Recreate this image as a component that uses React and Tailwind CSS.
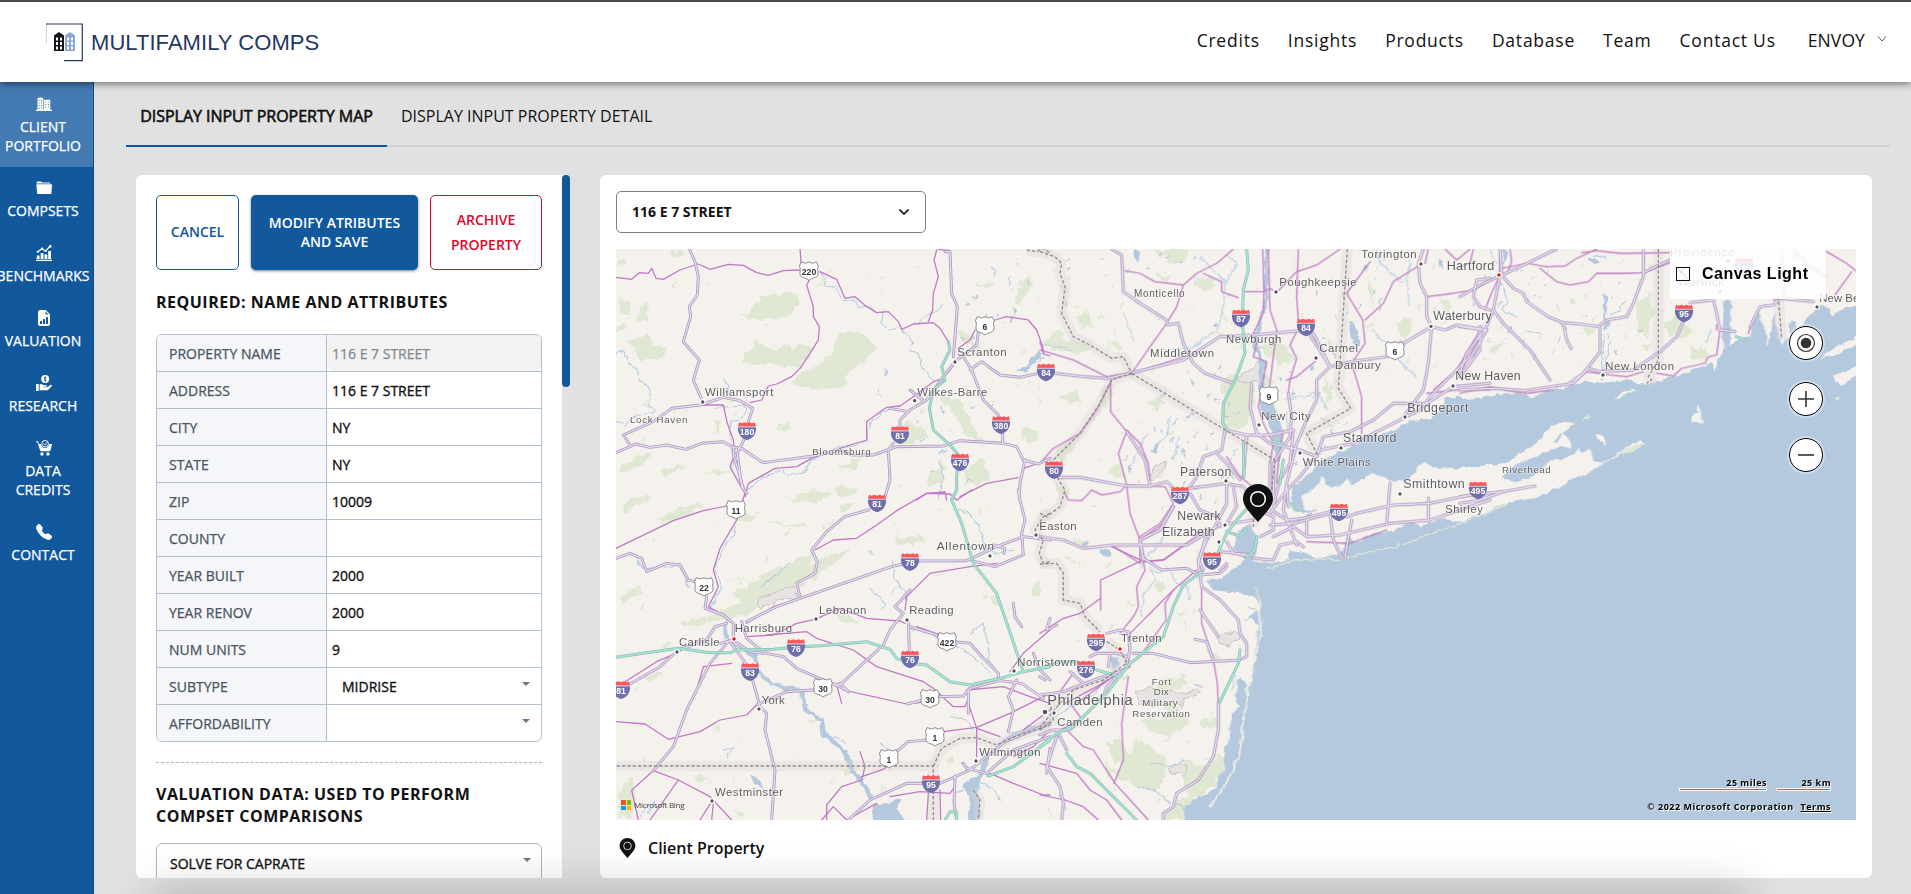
import React from "react";
import { BsFileEarmarkBarGraphFill, BsTelephoneFill } from "react-icons/bs";

/* ---------- map data: each sheet is drawn at 3 units per pixel ---------- */

const SHEETS = [
  {
    x: 600,
    y: 160,
    green: [
      "430,465 490,410 580,398 600,430 560,470 500,480 460,480",
      "425,590 470,545 520,570 600,550 640,570 600,620 520,610 450,620",
      "575,670 610,630 680,600 720,520 800,525 830,560 790,610 740,640 740,675 650,690",
      "90,540 140,520 160,560 195,560 190,600 120,600",
      "60,410 90,430 85,460 60,450", "130,430 150,440 145,490 110,480",
      "200,275 250,268 260,290 215,292", "50,300 80,290 78,318 55,320",
      "1130,370 1180,365 1175,378 1130,376", "1240,420 1265,360 1300,345 1290,390 1255,445",
      "1080,510 1150,560 1120,560 1080,540", "1010,700 1070,720 1100,760 1150,850 1100,830 1060,760",
      "930,780 990,830 940,850 900,860", "1090,930 1150,900 1170,960 1100,980",
      "60,920 130,880 150,890 100,930 60,940", "180,930 260,915 255,930 190,942",
      "720,920 790,890 770,920 725,935", "540,790 570,795 570,812 545,812", "345,785 360,780 360,808 348,812",
      "310,940 400,925 360,950", "700,980 780,990 720,1010", "980,960 1030,900 1030,960 990,985",
      "1270,800 1320,820 1290,850 1265,830", "50,500 80,490 82,510 50,515",
    ],
    water: ["1250,632 1280,620 1290,595 1315,570 1328,580 1318,600 1290,618 1285,635", "1240,440 1248,450 1243,472 1238,455", "850,625 862,640 855,648"],
    r: [
      "655,335 680,355 672,375 705,378 712,395 735,425 765,415 775,440 800,435 830,460 850,455 845,490 862,510 885,505 900,500 915,520 938,545 932,575 955,580 965,620 985,635 995,660",
      "50,585 70,570 85,610 110,630 120,660 150,690 150,740 165,755 100,770 75,800",
      "345,745 430,735 440,750 430,775 395,785 388,810 400,880 395,930 430,985",
      "440,990 480,955 545,930 560,945 610,940 630,905 690,870 760,855 800,845 812,790 870,745",
      "375,655 382,690 370,700", "950,490 990,460 1030,435", "1020,900 1030,950 1015,1010",
      "50,780 70,790", "835,690 845,708", "1175,320 1188,335 1182,350", "1205,482 1215,488",
    ],
    p: [
      "48,352 95,358 118,338 145,340 155,325 168,355 190,358 240,330 285,315 295,312 330,328 385,313 430,316 470,338 505,346 550,332 600,330",
      "600,267 603,305 612,320", "628,360 620,375 640,440 640,470 658,500 655,540 630,580 600,625 575,650 530,672 505,678 485,720 450,728",
      "660,335 710,358 735,415 765,410 800,440 830,458 865,455 895,485 905,508 940,492 1000,488 1020,505 1045,545",
      "1010,270 1002,300 1015,350 1000,400 998,450 985,485", "1015,268 1050,272",
      "1075,565 1110,540 1125,510", "1185,480 1220,470 1285,480 1310,510 1328,560 1330,582 1350,588",
      "220,745 300,735 370,735 382,790 400,840 405,880 390,920 420,975 435,1000",
      "435,1010 445,970 525,925 590,920 635,895 750,855 800,840 800,785 860,742 900,738 940,710 1000,665 1030,655 1065,610",
      "950,1020 980,1000 1035,996 1040,1020", "1080,1010 1160,970 1255,953", "1270,925 1310,912",
    ],
    h: [
      "268,267 285,305 295,350 292,405 268,440 272,470 250,545 298,600 280,660 308,724",
      "48,878 108,852 150,862 200,855 258,868 305,850 370,845 400,862 425,865 490,908 640,888 720,870 755,885 820,885 890,860 1030,858 1080,842 1210,850 1250,860 1270,900 1315,912 1350,895",
      "92,858 70,825 160,785 215,745 300,735 370,712 420,722 458,745 445,785",
      "432,838 412,880 425,980 440,1000", "400,862 402,890 430,985",
      "1035,275 1050,275 1055,400 1072,440 1065,530 1060,590", "1135,515 1130,555 1065,605 1030,650 980,720 930,750 900,780 900,805",
      "870,745 925,755", "930,690 970,722", "1090,590 1115,630 1150,720 1195,765 1208,790 1208,848",
      "1110,630 1145,605 1200,645 1260,652 1315,640", "880,850 865,870 870,960 855,1010",
      "1275,900 1260,970 1258,1020",
    ],
    t: ["1045,545 1050,570 1025,620 1035,660 1000,690 988,745 1000,810 1050,855 1075,885 1070,950 1070,990 1055,1020"],
    b: ["1280,270 1310,275 1330,265 1350,280"],
  },
  {
    x: 600,
    y: 490,
    green: [
      "60,60 100,20 150,25 120,45 70,68", "170,90 250,50 310,40 270,75 190,105", "380,30 420,60 470,85 440,95 400,85",
      "60,320 110,285 125,300 70,345", "240,400 330,375 440,330 560,270 700,190 750,175 700,225 560,310 440,370 300,410",
      "400,310 520,240 640,190 620,240 480,320 420,350", "560,30 640,0 700,10 640,45", "480,100 610,98 625,105 600,110",
      "880,150 960,135 980,150 900,165", "720,50 760,30 740,65", "720,370 780,395 720,400",
      "1290,300 1325,265 1320,310 1290,325", "1170,320 1190,310 1200,340 1180,345",
      "60,895 95,865 110,930 90,985 55,980", "130,560 180,545 190,560 150,572", "1040,810 1060,790 1055,830",
      "180,470 215,455 200,480", "620,690 660,685 650,700", "1260,790 1300,770 1290,800", "280,850 330,865 300,880",
      "400,960 440,975 420,985", "720,830 760,850 735,860", "1000,250 1040,255 1010,262",
    ],
    water: [
      "815,990 820,935 835,945 905,925 890,960 915,990", "1090,890 1105,865 1135,860 1150,800 1165,790 1160,830 1140,880 1135,910 1140,990 1105,990 1112,930",
      "1200,750 1240,728 1350,690 1350,705 1245,745 1215,762",
      "595,595 610,598 622,655 670,688 680,730 740,780 760,830 820,920 815,930 745,835 725,785 665,735 660,695 610,660",
      "370,400 382,400 388,450 470,495 478,540 520,580 580,590 600,600 560,602 510,585 470,545 460,505 370,445",
      "450,855 480,870 490,900 460,880",
    ],
    r: [
      "410,100 405,130 370,170 345,235 365,290 330,360 375,385 385,440", "110,195 130,240 240,225 265,290", "1075,60 1100,65 1140,110 1150,160 1180,190 1240,180",
      "880,215 885,270 915,300 920,330", "930,415 1010,440 1080,470 1145,520 1170,550", "1115,430 1150,400 1160,450 1170,510 1185,540",
      "1050,680 1100,690 1115,720", "810,300 860,345 845,355", "840,755 860,775", "370,780 400,770 385,800", "810,180 820,198", "120,980 160,930 145,970", "480,290 570,220",
      "700,740 722,750 735,760", "1130,870 1180,900 1200,930", "1090,900 1060,910",
    ],
    p: [
      "48,175 220,92 310,62 380,48", "438,0 410,90 360,175 340,240 355,290 325,350 385,385",
      "645,180 700,150 770,145 830,105 890,62 980,10 1050,12 1070,30", "1070,30 1115,0",
      "440,400 520,350 650,310", "440,440 520,435 590,400 645,388 720,355 800,385 900,393 915,400",
      "500,435 620,425 650,445 760,480 830,530 970,575 1000,595 1060,650 1095,650 1105,625",
      "915,360 920,320 990,250 1110,230 1190,220", "950,410 1050,445", "710,585 725,640", "730,600 920,642 980,635",
      "75,575 170,515 240,485", "395,520 310,530 290,600", "48,695 135,702 205,748 300,725 360,690 440,675 470,645",
      "160,842 235,870 330,920 395,990", "235,870 200,920 150,990", "340,940 335,990", "160,842 95,900 115,990", "335,935 300,990",
      "780,785 795,830 785,870 725,890 680,945 680,990", "785,860 850,838 868,825", "1030,725 1130,712 1230,670 1350,610",
      "1105,640 1130,715 1130,800", "1130,715 1200,740", "1100,600 1210,590 1290,620 1350,640", "1230,545 1270,490 1350,420",
      "870,920 960,905 1050,910 1065,890", "985,910 980,990", "1020,900 1022,990", "1170,850 1240,880 1330,915 1350,915", "1085,820 1110,840",
      "665,990 700,950 740,990 830,940", "1240,800 1300,770 1350,720", "1270,720 1350,660",
    ],
    h: [
      "440,395 530,350 600,325 880,228 960,213 1100,212 1190,170 1270,140 1350,150", "425,395 440,445 470,470 500,490 550,500 590,535 670,570 740,600 745,605",
      "48,205 90,190 125,205 140,245 200,220 240,225 265,270 285,275", "320,320 315,355 370,375 400,400 400,440",
      "805,60 735,80 680,125 635,180 652,215 645,250 590,280 600,320", "1115,212 1185,230 1270,195 1265,130 1275,90 1260,30 1255,0",
      "75,590 180,530 235,480 320,450 345,410 380,400", "390,455 430,510 455,560 480,650 500,670 495,720 525,840 515,990",
      "385,455 330,520 260,660 220,770 160,842", "470,645 560,605 640,600", "695,580 720,585 795,515 850,465 870,420 910,370 885,350 930,300",
      "925,390 928,480", "720,580 745,605", "890,785 925,755 980,750", "745,990 810,930 920,880 965,880", "1020,880 1110,840 1215,755 1350,700",
      "1065,860 1062,940 1070,990", "1015,620 1090,618 1110,595 1200,572 1265,580 1330,625", "1060,455 1110,460 1150,505 1195,550 1195,570",
      "1105,600 1105,670", "1250,570 1225,620 1240,660 1225,725", "930,410 1010,435", "1240,340 1245,380 1265,410", "1300,490 1320,540 1350,570", "1350,740 1240,780 1160,850", "1350,775 1340,850", "1180,165 1215,175 1212,190",
      "920,642 970,630", "360,460 400,450 450,485 490,490", "1090,820 1100,835 1160,850",
    ],
    t: [
      "48,502 160,485 235,475 330,488 390,488 410,480 520,478 600,470 660,467 800,455 870,478 890,505 930,520 980,525 1050,575 1110,585 1200,565 1270,545 1350,530",
      "1055,30 1085,100 1120,220 1190,310 1270,545", "1165,858 1240,830 1350,750", "1035,990 1050,965 1070,965 1070,990",
    ],
    b: [
      "50,828 1000,828 1000,990", "1000,828 1025,775 1080,745 1130,743 1190,765 1245,740 1350,705", "1350,70 1330,80 1305,120 1330,150 1318,190 1330,220 1350,215", "1120,900 1140,930 1135,990",
    ],
  },
  {
    x: 1040,
    y: 230,
    green: [
      "340,57 440,57 445,70 410,110", "10,330 60,300 80,330 150,340 160,365 80,365 20,355", "470,160 510,130 530,170 490,185",
      "550,450 600,430 650,470 640,540 600,600 560,595 545,550", "185,480 220,460 215,500 170,560 120,620 80,690 40,690 60,650 130,600 180,530",
      "650,350 690,340 740,345 760,380 720,410 690,380", "660,430 690,440 690,470 650,450", "60,500 110,480 120,510 90,520",
      "220,340 250,345 240,370", "100,255 150,250 155,290 130,300", "1060,280 1100,260 1120,300 1090,330", "350,130 400,140 370,155",
      "850,420 880,500 860,540", "200,715 240,700 250,740 210,735", "980,150 1010,180 995,220", "50,760 90,780 80,800 55,790", "1040,640 1080,600 1100,610",
      "1190,190 1230,230 1220,250", "90,930 150,935 130,955", "310,520 370,500 350,540", "860,320 880,340 870,370",
    ],
    water: [
      "675,57 686,57 684,220 660,300 652,350 680,400 670,470 700,520 725,600 722,700 705,690 695,600 660,520 655,440 660,390 640,350 645,300 670,240",
      "930,270 955,310 960,350 945,345 928,300", "285,57 300,70 295,100 283,80", "180,955 210,960 210,978 190,975",
      "330,660 360,640 345,670", "1195,85 1210,95 1205,120",
    ],
    r: [
      "560,75 590,100 555,160 550,215 545,250 530,300 500,320 455,355 360,360", "1010,60 1015,90 1050,130 1085,155", "0,345 40,350 100,360",
      "1000,300 1040,345 1070,385 1130,440", "390,560 380,620 350,640", "480,80 520,120 560,160", "730,510 780,500 830,490 860,540",
      "300,1020 320,980 350,950 370,920", "250,250 280,330", "420,620 400,680", "280,690 300,650 320,610", "740,540 745,600", "840,560 880,590", "1110,80 1100,160 1110,230",
    ],
    p: [
      "255,122 300,130 345,155 430,165 470,130 530,100 580,57", "430,165 410,230 380,280 330,350 275,430", "490,130 545,155 545,185 595,203",
      "612,185 670,185 690,175 705,185", "668,57 672,180 670,250 640,310 650,340 640,380 680,395 668,460", "685,57 690,240 710,300 690,460 685,490",
      "775,57 770,200 775,270", "710,187 770,125 830,105 900,57", "990,95 920,190 968,270 975,340 935,400 965,500 965,610", "770,305 750,345 770,385 750,450 745,490",
      "1140,105 1060,155 1030,220 975,270", "1165,57 1155,100", "1160,200 1240,190 1300,180 1350,150", "0,360 100,390 200,440 275,430 370,400 460,370",
      "212,450 212,545 260,605 235,670 260,765 270,850 300,930 300,1000", "0,700 40,655 120,610 170,540 215,450", "260,600 300,640 325,700 330,750",
      "75,790 85,810 125,812 155,780 185,795 240,785 260,765 375,770 400,820 360,880 300,920", "300,1000 215,945", "310,995 370,990 440,940 490,900",
      "668,460 655,530 670,580 700,640 690,700", "730,600 715,700 710,760", "0,335 10,370", "1215,57 1250,90 1290,57", "1320,300 1250,420 1180,480", "740,450 770,440 830,390",
      "800,935 930,940 1040,900", "560,680 600,740 650,780", "1160,490 1250,480 1350,480",
    ],
    h: [
      "215,57 245,75 250,185 300,220 380,270 382,285 415,280 430,340 460,400 495,430 580,460", "45,430 130,440 200,445 270,430 430,390 540,320 640,315 770,303 800,300 870,410",
      "1150,57 1135,100 1140,160 1160,200 1160,260 1175,290 1215,300 1250,285 1340,300", "820,310 850,370 870,410 830,450 830,510 800,570 770,640 740,760 745,830",
      "870,410 930,395 1040,380", "1090,340 1175,290", "1175,290 1165,400 1150,480 1120,520 1090,560",
      "1350,145 1310,150 1300,200 1320,230 1350,240", "1340,300 1300,370 1240,430 1170,500 1140,540 1060,580 940,640 840,660 780,740 740,780 690,850",
      "1350,460 1240,470 1160,520 1060,520 1000,570 930,605 850,620 830,680", "635,460 630,530 650,610 690,640 780,660 830,680",
      "555,600 620,615 690,615 760,600", "555,600 545,660 490,680 470,740 450,770", "620,615 610,740", "760,600 750,700 720,750 700,830",
      "58,742 120,742 260,768 330,768 380,755 400,775", "448,775 560,760 610,770 640,810", "530,670 560,700 600,750", "330,768 315,690 260,605",
      "450,790 480,840 530,860 540,890", "560,760 560,820 530,880 500,930 475,990 490,1020", "400,830 360,900 300,930 310,990", "0,920 70,930 130,955 220,945 300,945 440,945 540,885 640,870",
      "695,840 740,870 790,865 870,845", "690,885 760,880 870,850", "920,860 950,850 1060,825 1170,820 1290,795", "700,920 760,890 800,920 900,915 1050,880 1170,870 1290,830 1350,810",
      "1050,760 1040,880", "1165,805 1165,870", "870,850 880,930 905,985", "935,870 915,980", "800,870 800,920", "740,760 730,840 770,945",
      "640,985 700,990 720,945 770,935 790,950", "540,965 590,970 620,980", "540,1020 560,1000", "690,700 690,780 660,830", "745,490 755,560 750,620 700,700 700,790",
      "635,830 700,860 700,900 660,920", "580,770 590,830 560,880",
    ],
    t: ["620,57 625,120 610,180 608,240", "608,290 615,370 585,450 550,520 548,580 560,598", "700,635 730,642", "610,640 612,740", "730,690 720,760", "630,825 590,870 560,910 535,965", "560,905 600,918 620,900", "650,920 645,960 620,980", "755,820 765,840"],
    b: [
      "0,65 45,80 65,100 60,130 75,170 65,250 100,320 150,345 215,385 250,380 275,430", "275,430 705,690", "275,430 215,450 180,520 120,610 40,690 50,740 75,780 60,830 20,860 0,850",
      "922,57 895,475 932,535 800,610 835,680", "705,690 695,780", "640,850 640,890",
    ],
    dots: [[708, 186], [828, 384], [1143, 102], [1173, 289], [1239, 468], [1095, 561], [903, 654], [780, 669], [657, 585], [558, 753], [555, 885], [537, 936], [1080, 792]],
  },
  {
    x: 1460,
    y: 230,
    green: ["530,230 570,180 580,250 560,320 530,300", "610,270 650,260 700,300 660,330 620,310", "690,350 750,355 730,400 700,390", "540,350 580,330 560,360", "320,210 350,200 340,225", "470,100 500,90 480,105", "370,290 410,300 385,320", "90,350 130,340 100,375", "250,100 270,120 260,130"],
    water: ["125,57 142,60 135,110 128,90", "430,190 445,200 438,260 450,290 435,300", "380,90 405,80 420,95 400,100", "1000,57 1010,90 1000,85"],
    r: ["130,170 140,210 125,240 170,260", "400,75 440,85", "450,250 480,240 500,210", "435,310 425,400 430,450", "450,340 440,380 430,430", "300,280 320,300", "200,300 240,310", "90,60 110,100", "30,400 60,350", "750,300 740,340"],
    p: [
      "120,57 118,140 90,200 75,240", "150,57 155,95 145,120", "125,115 200,100 260,110 315,108 350,85 410,57", "240,115 290,155 330,165 385,155 410,130 490,130 550,128",
      "365,68 410,62 480,70 630,68", "550,128 630,98", "375,425 420,430 450,435 500,440 550,425", "590,430 640,438 665,415 735,400 745,380 770,375 780,300", "60,320 0,430", "0,490 90,470 160,485 200,490 280,480",
      "1095,62 1160,100 1190,125", "1175,125 1125,195", "940,210 985,200", "40,57 30,100 0,110", "770,285 770,300", "880,265 865,310",
    ],
    h: [
      "290,57 170,115 125,135 120,57", "125,135 60,165 0,200", "125,135 160,175 190,190 200,215 265,260 310,278 360,282 420,290 420,365 370,430 325,462", "120,135 100,240 75,300 20,370 0,430",
      "100,240 130,280 210,360 270,450", "310,280 320,330 333,355", "0,290 75,300", "420,285 440,270 500,260 520,220 550,140 550,57",
      "0,480 100,475 190,482 270,470 340,460 385,415 420,425 520,420 600,365 650,320 670,275", "550,128 630,90", "690,218 740,212 760,210 770,250 780,300 825,305",
      "870,290 900,230 940,225 960,205 1060,215", "965,57 970,150 975,200", "1000,57 1050,110 1095,140", "0,800 80,790 130,785 225,768", "60,290 60,360 0,440", "0,820 60,810 130,785",
    ],
    t: ["828,320 855,328"],
    b: ["595,57 595,390 565,440 575,450 560,460", "955,200 965,328"],
    dots: [[429, 435], [1071, 231], [781, 184]],
  },
  {
    x: 1040,
    y: 490,
    green: ["340,590 390,560 430,550 440,580 400,600 400,640 450,700 380,735 330,720 300,690 380,680", "200,760 240,750 270,790 290,745 350,780 385,810 360,900 300,890 230,860 240,830 220,790", "340,280 370,270 380,300 350,300", "475,700 530,680 540,720 490,710", "430,810 500,830 540,790 555,820 520,890 450,930 430,870", "380,960 430,920 480,930 480,975 420,990 370,990", "90,800 110,800 105,820", "240,540 270,560 250,570", "20,960 35,970 25,985", "500,480 540,500 520,520", "260,330 280,340 265,350", "400,360 440,365 420,375", "70,200 100,210 80,215", "190,820 240,850 200,860"],
    water: ["205,505 235,500 240,530 215,540", "180,175 212,185 205,200 188,195", "130,155 150,160 145,172 130,168"],
    r: ["330,230 345,270 310,310 305,380", "380,230 410,280 440,290 450,330", "290,895 340,900 390,940", "590,560 570,600", "0,715 60,670 150,620 230,540", "330,240 360,250", "465,580 485,590", "330,820 400,830 430,810", "440,960 400,940", "80,960 60,920", "620,350 660,365", "610,390 650,370"],
    p: [
      "182,360 182,270 305,212 215,170", "182,325 120,370 70,385 0,430", "310,215 315,240 290,290 295,350 280,380 240,430", "470,240 400,300 270,430 265,530", "485,290 485,400 520,510 532,580 535,650",
      "400,300 375,340 378,390 300,500 110,640", "265,560 245,700 250,810 222,880", "85,725 130,770 160,780 225,880 325,990", "110,850 150,900 200,930 245,990", "0,820 110,850", "75,930 130,950 175,990", "0,915 75,930",
      "75,640 170,590 270,530", "60,605 100,550", "90,640 120,680", "300,150 370,100 400,50", "120,690 60,720", "310,215 370,210 440,160",
    ],
    h: [
      "300,160 310,205 365,240 440,235 480,255 540,250 560,230", "400,50 360,120 300,150", "500,130 475,220 485,290 540,330 595,390 600,430 620,460 620,500 608,505", "480,360 535,440",
      "465,448 500,455 520,510", "280,490 340,490 450,518 600,510",
      "535,640 535,720 520,800 475,870 410,910 400,950 370,970 370,990", "200,430 240,420 265,425 270,480 260,520", "150,500 170,490 230,490 260,500", "250,540 200,590 190,620", "0,615 70,605 190,560 240,545",
      "50,720 80,780", "50,740 20,830 60,890 70,940 65,990", "0,735 40,720 90,720 120,690", "210,490 205,530", "30,385 20,420 50,405", "0,560 15,570",
      "560,155 580,190 640,195", "90,545 130,580",
    ],
    t: ["485,245 430,285 400,350 370,440 270,520 200,610 100,710 50,730 0,770", "600,480 595,520 540,635", "80,790 110,830 150,850 290,990", "170,540 240,560", "0,535 60,515 110,515"],
    b: ["0,222 50,220 70,250 70,330 120,340 135,380 180,425", "200,455 240,480 260,520 190,570 100,600 60,640 0,712", "0,720 40,690 30,640"],
    dots: [[15, 666, 1], [42, 669]],
  },
];

SHEETS[0].dots = [[308, 726], [1065, 606], [944, 722]];
SHEETS[1].dots = [[648, 387], [921, 390], [231, 486], [477, 657], [336, 933], [1128, 813], [1170, 198], [1308, 135], [1242, 543]];

const OCEAN =
  "2460,225 2410,235 2380,260 2355,225 2320,240 2290,280 2270,300 2260,270 2245,285 2250,320 2235,330 2225,345 2210,290 2205,240 2185,350 2175,300 2155,240 2130,320 2110,325 2090,330 2070,350 2072,290 2075,210 2050,215 2045,290 2050,360 2035,390 2025,425 2015,400 1960,420 1900,440 1860,450 1820,465 1760,450 1690,458 1630,455 1590,470 1530,480 1480,505 1450,490 1390,490 1330,500 1290,510 1250,500 1215,505 1200,545 1170,565 1110,575 1060,598 1020,615 980,620 950,645 900,665 840,695 820,720 790,745 760,770 750,800 770,845 790,850 820,845 790,835 785,800 800,790 820,770 850,740 860,765 900,770 920,745 935,765 1000,730 1060,755 1100,750 1130,718 1150,692 1175,712 1260,714 1310,710 1390,700 1460,660 1500,630 1530,590 1570,575 1605,580 1560,615 1535,635 1550,640 1570,612 1588,630 1592,658 1565,648 1530,662 1500,675 1460,690 1420,710 1385,740 1430,758 1475,745 1500,720 1540,690 1590,680 1615,660 1625,672 1648,652 1660,690 1690,700 1740,670 1760,650 1800,630 1815,645 1740,675 1620,740 1490,803 1420,815 1310,855 1260,875 1200,870 1150,885 1100,880 1060,905 1000,910 960,935 920,920 900,975 830,985 790,965 750,960 740,990 690,1000 640,990 655,930 640,900 630,880 600,900 580,960 615,985 590,1010 560,1035 500,1055 520,1080 560,1085 610,1090 650,1110 662,1140 625,1160 655,1185 650,1220 640,1310 625,1370 600,1340 585,1390 600,1430 570,1460 570,1520 550,1560 555,1610 520,1680 460,1710 430,1740 440,1790 2460,1790";

const PATCHES = [
  "700,800 720,790 730,830 700,850", "1665,612 1690,615 1698,645 1682,635", "1628,570 1650,555 1645,562 1632,572", "2100,230 2120,225 2120,290 2105,300",
  "1955,560 1972,550 1970,527 1976,525 1980,550 1990,568 1985,580 1958,578",
  "2460,315 2400,345 2360,370 2345,383 2380,378 2460,335",
  "2380,435 2460,405 2460,435 2420,455 2400,465 2385,450", "1725,505 1750,485 1790,478 1750,500 1735,507",
];

const LABELS = [
  [0, "Williamsport", 315, 708, 205], [0, "Scranton", 1072, 588, 148], [0, "Wilkes-Barre", 952, 708, 210], [0, "Lock Haven", 90, 788, 172, 29], [0, "Bloomsburg", 637, 885, 175, 29],
  [1, "Allentown", 1010, 180, 172, 35], [1, "Reading", 928, 372, 133], [1, "Lebanon", 657, 372, 142], [1, "Harrisburg", 404, 427, 172], [1, "Carlisle", 237, 468, 122], [1, "York", 485, 642, 69], [1, "Westminster", 345, 918, 204], [1, "Wilmington", 1138, 798, 184], [1, "Norristown", 1252, 528, 176],
  [2, "Monticello", 282, 201, 152, 30], [2, "Poughkeepsie", 718, 168, 232], [2, "Newburgh", 558, 339, 166], [2, "Middletown", 330, 381, 192], [2, "Carmel", 838, 366, 116], [2, "Danbury", 885, 417, 137], [2, "Torrington", 964, 84, 166], [2, "Hartford", 1220, 119, 143, 38], [2, "Waterbury", 1180, 269, 175, 37], [2, "New Haven", 1246, 449, 196, 37], [2, "Bridgeport", 1102, 545, 183, 37], [2, "Stamford", 909, 636, 160, 37], [2, "White Plains", 788, 708, 204], [2, "New City", 664, 570, 148], [2, "Paterson", 420, 738, 154, 37], [2, "Newark", 412, 869, 130, 37], [2, "Elizabeth", 366, 917, 158, 37], [2, "Smithtown", 1090, 773, 184, 37], [2, "Shirley", 1216, 849, 112, 33], [2, "Easton", -2, 900, 112],
  [3, "New London", 436, 419, 206], [3, "Riverhead", 126, 729, 146, 29], [3, "Providence", 630, 78, 193], [3, "Warwick", 655, 167, 137], [3, "New Bedford", 1078, 215, 198],
  [4, "Trenton", 243, 456, 122], [4, "Philadelphia", 22, 645, 256, 44], [4, "Camden", 52, 708, 136], [4, "Fort", 335, 585, 58, 29], [4, "Dix", 341, 615, 45, 29], [4, "Military", 307, 648, 106, 29], [4, "Reservation", 277, 681, 173, 29],
];

const INTERSTATES = [
  [0, "180", 441, 813], [0, "81", 900, 825], [0, "380", 1203, 795], [0, "476", 1080, 907], [0, "84", 1338, 637],
  [1, "81", 831, 40], [1, "78", 930, 216], [1, "76", 588, 474], [1, "76", 930, 508], [1, "83", 450, 546], [1, "81", 63, 600], [1, "95", 993, 882],
  [2, "87", 603, 265], [2, "84", 798, 292], [2, "80", 42, 720], [2, "287", 420, 796], [2, "495", 897, 847], [2, "495", 1314, 781], [2, "95", 516, 993],
  [3, "95", 672, 250], [3, "195", 853, 110], [4, "295", 168, 457], [4, "276", 138, 538],
];

const ROUTES = [
  [0, "220", 627, 333], [0, "6", 1155, 497], [1, "11", 408, 59], [1, "22", 312, 290], [1, "30", 669, 593], [1, "422", 1041, 455], [1, "30", 990, 626], [1, "1", 1005, 740], [1, "1", 867, 806],
  [2, "9", 687, 497], [2, "6", 1065, 362],
];

const PARKS = [[1, "475,330 580,285 592,325 545,328 500,345 480,355"], [2, "595,440 640,410 660,390 680,395 675,430 655,455 600,455"], [2, "325,745 345,710 380,693 375,715 340,752"], [4, "290,605 330,590 360,600 440,610 470,595 485,610 430,625 425,655 405,630 375,650 300,640"], [4, "535,445 560,425 600,430 598,450 575,455 570,468 545,465"], [4, "385,835 400,820 437,822 437,865 420,850 395,855"]];

function seeded(seed) {
  let s = seed;
  return () => {
    s = (s * 16807) % 2147483647;
    return s / 2147483647;
  };
}

/* small lakes and woods: [centre x, centre y, spread x, spread y, count] in page pixels */
function scatter(seed, areas, size) {
  const rnd = seeded(seed);
  const out = [];
  areas.forEach(([cx, cy, sx, sy, n]) => {
    for (let i = 0; i < n; i++) {
      const x = cx + (rnd() * 2 - 1) * sx;
      const y = cy + (rnd() * 2 - 1) * sy;
      const a = size * (0.4 + rnd());
      const b = size * (0.3 + rnd() * 0.5);
      out.push(`${x},${y} ${x + b},${y - a} ${x + b * 1.4},${y - a * 0.6} ${x + b * 0.5},${y + b * 0.5}`);
    }
  });
  return out;
}
const PONDS = scatter(77, [[1250, 400, 95, 110, 70], [1180, 440, 60, 50, 35], [1350, 310, 60, 55, 30], [1010, 320, 60, 60, 18], [1560, 310, 90, 50, 36], [1130, 280, 70, 30, 15], [950, 460, 50, 60, 10]], 3.6);
const WOODS = scatter(31, [[1000, 400, 120, 130, 40], [1200, 350, 140, 90, 45], [1570, 320, 100, 55, 36], [800, 350, 180, 90, 28], [820, 560, 190, 60, 32], [1150, 590, 80, 60, 30], [760, 740, 130, 60, 16], [1170, 760, 60, 45, 20], [1400, 330, 50, 60, 20]], 4.4);

function Sheets({ pick, ...rest }) {
  return SHEETS.map((s, i) => (
    <g key={i} transform={`translate(${s.x} ${s.y}) scale(.33333)`} {...rest}>
      {pick(s, i)}
    </g>
  ));
}

const lines = (list) => (list || []).map((p, i) => <polyline key={i} points={p} />);
const polys = (list) => (list || []).map((p, i) => <polygon key={i} points={p} />);

function RegionMap() {
  return (
    <svg className="block h-full w-full" viewBox="616 249 1240 571" strokeLinejoin="round" strokeLinecap="round">
      <defs>
        <filter id="ragged" x="606" y="239" width="1260" height="591" filterUnits="userSpaceOnUse">
          <feTurbulence type="fractalNoise" baseFrequency="0.11" numOctaves="3" seed="4" />
          <feDisplacementMap in="SourceGraphic" scale="11" xChannelSelector="R" yChannelSelector="G" />
        </filter>
        <filter id="wobble" x="606" y="239" width="1260" height="591" filterUnits="userSpaceOnUse">
          <feTurbulence type="fractalNoise" baseFrequency="0.12" numOctaves="2" seed="9" />
          <feDisplacementMap in="SourceGraphic" scale="6" xChannelSelector="R" yChannelSelector="G" />
        </filter>
      </defs>
      <rect x="616" y="249" width="1240" height="571" fill="#f5f2ee" />
      <g filter="url(#ragged)">
        <g fill="#e0e8d3">
          <Sheets pick={(s) => polys(s.green)} />
          {polys(WOODS)}
        </g>
        <g fill="#b5c9de">{polys(PONDS)}</g>
      </g>
      <g filter="url(#wobble)">
        <Sheets fill="#e6e4e3" stroke="#cbbfc0" strokeWidth="3" pick={(s, i) => polys(PARKS.filter((p) => p[0] === i).map((p) => p[1]))} />
        <Sheets fill="#b5c9de" pick={(s) => polys(s.water)} />
        <Sheets fill="none" stroke="#b2cbe3" strokeWidth="3.2" pick={(s) => lines(s.r)} />
        <g transform="translate(1040 230) scale(.33333)">
          <polygon points={OCEAN} fill="#b5c9de" />
          <g fill="#f5f2ee">{polys(PATCHES)}</g>
          <polygon points="1740,668 1790,640 1815,645 1750,675" fill="#e0e8d3" />
          <polygon points="2385,502 2398,502 2396,510 2384,508" fill="#e0e8d3" />
          <path d="M1395 745L1500 720M590 960L620 900M760 770L790 830M800 860L830 840M1010 700L1060 660" fill="none" stroke="#b5c9de" strokeWidth="6" />
          <path d="M682 1017L760 990L830 986L885 990L1000 965L1100 940L1260 880L1400 825M640 1070L655 1090L658 1110" fill="none" stroke="#dfe6d6" strokeWidth="4" />
          <path d="M660 1110L660 1220L640 1310L625 1370L607 1500L598 1575L560 1660L510 1730" fill="none" stroke="#eeeee6" strokeWidth="6" />
        </g>
      </g>
      <Sheets fill="none" stroke="#ded6d4" strokeOpacity=".38" strokeWidth="32" strokeLinecap="butt" pick={(s) => lines(s.b)} />
      <Sheets fill="none" stroke="#bf79c1" strokeWidth="3.8" pick={(s) => lines(s.p)} />
      <Sheets fill="none" stroke="#ad99bf" strokeWidth="8.8" pick={(s) => lines(s.h)} />
      <Sheets fill="none" stroke="#e6dbee" strokeWidth="4" pick={(s) => lines(s.h)} />
      <Sheets fill="none" stroke="#8db9ae" strokeWidth="9" pick={(s) => lines(s.t)} />
      <Sheets fill="none" stroke="#a6e3d5" strokeWidth="5.5" pick={(s) => lines(s.t)} />
      <Sheets fill="none" stroke="#8f8d8d" strokeWidth="4" strokeDasharray="10 6" strokeLinecap="butt" pick={(s) => lines(s.b)} />
      <Sheets
        pick={(s) => (s.dots || []).map(([x, y, big], i) => <circle key={i} cx={x} cy={y} r={big ? 9 : 7} fill="#555" stroke="#fff" strokeWidth="4" />)}
      />
      <g fill="#e21a1a" stroke="#fff" strokeWidth="1.2">
        <circle cx="734" cy="639" r="2.4" />
        <circle cx="1499" cy="275" r="2.4" />
        <circle cx="1120" cy="649" r="2.4" />
        <circle cx="1728" cy="261" r="2.4" />
      </g>
      <Sheets
        pick={(s, n) => (
          <>
            {INTERSTATES.filter((r) => r[0] === n).map(([, t, x, y], i) => (
              <g key={i} transform={`translate(${x} ${y})`}>
                <path d="M-27 -13H27C29 8 18 22 0 27C-18 22 -29 8 -27 -13Z" fill="#6f70ab" />
                <path d="M-24 -26L-16 -23L-8 -26L0 -23L8 -26L16 -23L24 -26L27 -13H-27Z" fill="#f9595c" />
                <path d="M-27 -12H27" stroke="#fff" strokeWidth="2" />
                <text y="12" textAnchor="middle" fontSize="26" fontWeight="700" fill="#fff">{t}</text>
              </g>
            ))}
            {ROUTES.filter((r) => r[0] === n).map(([, t, x, y], i) => (
              <g key={i} transform={`translate(${x} ${y})`}>
                <path d="M-22 -27L-11 -23L0 -27L11 -23L22 -27L28 -14C22 -6 30 4 26 14C20 22 8 20 0 28C-8 20 -20 22 -26 14C-30 4 -22 -6 -28 -14Z" fill="#fff" stroke="#777" strokeWidth="2.5" />
                <text y="12" textAnchor="middle" fontSize="26" fontWeight="700" fill="#333">{t}</text>
              </g>
            ))}
            {LABELS.filter((l) => l[0] === n).map(([, t, x, y, w, size = 34], i) => (
              <text key={i} x={x} y={y} textLength={w} fontSize={size} fill="#5c5c5e" stroke="#fff" strokeOpacity=".55" strokeWidth="4" paintOrder="stroke">{t}</text>
            ))}
          </>
        )}
      />
    </svg>
  );
}

/* ---------- icons ---------- */

const Buildings = () => (
  <svg viewBox="0 0 16 16" className="h-4 w-4" fill="currentColor">
    <path fillRule="evenodd" d="M0 13.8h1.500V2.300L4 1.200L7.300 2V13.800H8V3.800H14.300V13.800H16V15H0zM2.600 4v1h1V4zm2.400 0v1h1V4zM2.600 6.500v1h1v-1zm2.400 0v1h1v-1zM2.600 9v1h1V9zM5 9v1h1V9zM2.600 11.500v1h1v-1zm2.400 0v1h1v-1zM9.200 5.500v1h1v-1zm2.700 0v1h1v-1zM9.200 8v1h1V8zm2.700 0v1h1V8zM9.200 10.500v1h1v-1zm2.700 0v1h1v-1z" />
  </svg>
);
const Folder = () => (
  <svg viewBox="0 0 16 16" className="h-4 w-4" fill="currentColor">
    <path d="M.6 2.2Q.7 1.5 1.3 1.5H4.9L6 2.6H13.6Q14.4 2.7 14.4 3.5H.6zM.6 4.2H15.4Q16 4.2 16 4.9L15.4 13.2Q15.3 14 14.6 14H1.9Q1.2 14 1.1 13.2L.4 4.9Q.3 4.2.6 4.2z" />
  </svg>
);
const Chart = () => (
  <svg viewBox="0 0 16 16" className="h-4 w-4" fill="currentColor">
    <path d="M0 14.7h16V16H0zM.8 10.500h2.800V14H.8zM4.700 8h2.800v6H4.700zm3.800 1.600H11.300V14H8.500zM12.200 6h2.800v8h-2.800z" />
    <path d="M1.500 7L6 3.700L9.500 6L14 1.500" fill="none" stroke="currentColor" strokeWidth="1.200" />
    <circle cx="1.800" cy="6.800" r="1.100" /><circle cx="6" cy="3.800" r="1.200" /><circle cx="9.600" cy="6" r="1.100" /><circle cx="14.200" cy="1.400" r="1.400" />
  </svg>
);
const HandCoin = () => (
  <svg viewBox="0 0 16 16" className="h-4 w-4" fill="currentColor">
    <circle cx="9.2" cy="4" r="4" />
    <path d="M10.400 2.600Q9.200 1.600 8.400 2.600Q8 3.500 9.200 4Q10.600 4.500 10 5.400Q9.200 6.200 8 5.400M9.200 1.300V6.700" fill="none" stroke="#12589c" strokeWidth=".8" />
    <path d="M0 9H2.700V16H0zM3.600 9.500Q5 8.700 6.500 9.500L8 10.300H10.500Q11.500 10.700 10.800 11.700H7.500V12.300H11.300L14.500 10Q16 9.500 16 10.700L12.600 14.600Q12 15.200 11 15.200H3.600z" />
  </svg>
);
const CartCheck = () => (
  <svg viewBox="0 0 16 16" className="h-4 w-4" fill="currentColor">
    <path d="M0 1.200L2.200 1.400L2.900 4H5Q5.500 8 9 8.200Q12.600 8 13.200 4H16L14.600 10.200Q14.300 11.200 13.300 11.200H5.200Q4.300 11.200 4 10.300L1.600 2.600L0 2.300z" />
    <circle cx="9.100" cy="3.800" r="3.300" fill="none" stroke="currentColor" strokeWidth="1" />
    <path d="M7.500 3.800L8.800 5L11 2.500" fill="none" stroke="currentColor" strokeWidth="1" />
    <circle cx="6" cy="14" r="1.700" /><circle cx="11.900" cy="14" r="1.700" />
  </svg>
);

function Pin({ className }) {
  return (
    <svg viewBox="0 0 30 38" className={className}>
      <path d="M15 0C23.300 0 30 6.600 30 14.700C30 22.500 23 28.500 15 38C7 28.500 0 22.500 0 14.700C0 6.600 6.700 0 15 0Z" fill="#111" />
      <circle cx="15" cy="15" r="7.300" fill="none" stroke="#fff" strokeWidth="1.500" />
    </svg>
  );
}

function Logo() {
  return (
    <svg viewBox="0 0 38 39" className="h-[39px] w-[38px]">
      <path d="M.5 20V1" stroke="#cfd3dc" fill="none" />
      <path d="M0 1H36.300V37.700H18" stroke="#24375f" strokeWidth="1.200" fill="none" />
      <path d="M8 28V12.500L10 11L13 9L16 11L18 12.500V28Z" fill="#14161b" />
      <path d="M19 28V12.500L21 11L24 9L27 11L29 12.500V28Z" fill="#8ba6da" />
      <path d="M10 14.500h2v3h-2zm4 0h2v3h-2zM10 19h2v3h-2zm4 0h2v3h-2zM10 23.500h2v3h-2zm4 0h2v3h-2zM21 14.500h2v3h-2zm4 0h2v3h-2zM21 19h2v3h-2zm4 0h2v3h-2zM21 23.500h2v3h-2zm4 0h2v3h-2z" fill="#fff" />
    </svg>
  );
}

/* ---------- page ---------- */

const NAV = ["Credits", "Insights", "Products", "Database", "Team", "Contact Us"];

const SIDE = [
  [["CLIENT", "PORTFOLIO"], <Buildings />],
  [["COMPSETS"], <Folder />],
  [["BENCHMARKS"], <Chart />],
  [["VALUATION"], <BsFileEarmarkBarGraphFill className="h-4 w-4" />],
  [["RESEARCH"], <HandCoin />],
  [["DATA", "CREDITS"], <CartCheck />],
  [["CONTACT"], <BsTelephoneFill className="h-4 w-4" />],
];

const FIELDS = [
  ["PROPERTY NAME", "116 E 7 STREET", "disabled"],
  ["ADDRESS", "116 E 7 STREET"],
  ["CITY", "NY"],
  ["STATE", "NY"],
  ["ZIP", "10009"],
  ["COUNTY", ""],
  ["YEAR BUILT", "2000"],
  ["YEAR RENOV", "2000"],
  ["NUM UNITS", "9"],
  ["SUBTYPE", "MIDRISE", "select"],
  ["AFFORDABILITY", "", "select"],
];

const Caret = () => <span className="h-0 w-0 border-x-4 border-t-4 border-x-transparent border-t-[#777]" />;

function MapButton({ children }) {
  return (
    <span className="flex h-[34px] w-[34px] items-center justify-center rounded-full border border-black bg-white shadow-[0_0_0_2px_rgba(255,255,255,0.35)]">
      <svg viewBox="0 0 20 20" className="h-5 w-5" fill="none" stroke="#333" strokeWidth="1.6">{children}</svg>
    </span>
  );
}

export default function App() {
  return (
    <div className="relative flex h-[894px] w-[1911px] flex-col overflow-hidden bg-[#e1e1e1] font-['Open_Sans',sans-serif] text-[#111]">
      <header className="relative z-10 flex h-[82px] shrink-0 items-center border-t-2 border-[#4b494b] bg-white pl-[46px] pr-6 shadow-[0_1px_8px_rgba(0,0,0,0.6)]">
        <Logo />
        <span className="ml-[7px] font-['Liberation_Sans',sans-serif] text-[22px] tracking-[0.05px] text-[#24375f]">MULTIFAMILY COMPS</span>
        <nav className="ml-auto flex items-center gap-[28px] pb-[3px] text-[17.500px] tracking-[0.77px] whitespace-nowrap">
          {NAV.map((n) => (
            <a key={n}>{n}</a>
          ))}
          <span className="ml-1 flex items-center gap-3 tracking-[0.1px]">
            ENVOY
            <svg viewBox="0 0 10 6" className="-mt-1 h-[6px] w-[10px]" fill="none" stroke="#555"><path d="M1 .5L5 5L9 .5" /></svg>
          </span>
        </nav>
      </header>

      <div className="flex min-h-0 flex-1">
        <aside className="w-[94px] shrink-0 border-r border-[#0d4a88] bg-[#12589c] text-white">
          {SIDE.map(([words, icon], i) => (
            <div key={i} className={i === 0 ? "h-[85px] bg-[#437ab2] pt-[14px] pr-[6px]" : words.length > 1 ? "h-[84px] pt-[13px] pr-[6px]" : "h-[65px] pt-[13px] pr-[6px]"}>
              <div className="flex flex-col items-center gap-[5px]">
                {icon}
                <div className="pr-px text-center text-[14px] leading-[19px] font-medium whitespace-nowrap [-webkit-text-stroke:0.25px_#fff]">
                  {words.map((w) => (
                    <div key={w} className="-mx-3">{w}</div>
                  ))}
                </div>
              </div>
            </div>
          ))}
        </aside>

        <main className="min-w-0 flex-1 pl-8 pr-[21px]">
          <div className="flex h-[65px] border-b-2 border-[#d2d2d2] text-[16px] whitespace-nowrap">
            <span className="flex h-[65px] w-[261px] items-center justify-center border-b-2 border-[#12589c] pt-[4px] tracking-[-0.020px] [-webkit-text-stroke:0.6px_#111]">DISPLAY INPUT PROPERTY MAP</span>
            <span className="flex h-[65px] items-center px-[14px] pt-[2px]">DISPLAY INPUT PROPERTY DETAIL</span>
          </div>

          <div className="mt-7 flex h-[703px] pl-[10px]">
            <section className="h-full w-[426px] shrink-0 overflow-hidden rounded-l-md bg-white px-5 pt-5">
              <div className="flex h-[75px] gap-3 text-center text-[14px] font-semibold">
                <button className="w-[83px] rounded-[5px] border border-[#12589c] pb-[2px] text-[#12589c]">CANCEL</button>
                <button className="w-[167px] rounded-[5px] bg-[#12589c] px-4 pb-[2px] leading-[19px] text-white shadow-[0_1px_3px_rgba(0,0,0,0.5)]">MODIFY ATRIBUTES AND SAVE</button>
                <button className="w-[112px] rounded-[5px] border border-[#e2062c] px-4 pb-[2px] leading-[25px] text-[#e2062c]">ARCHIVE PROPERTY</button>
              </div>
              <h2 className="mt-[21px] text-[16px] leading-[22px] font-bold tracking-[0.5px] whitespace-nowrap">REQUIRED: NAME AND ATTRIBUTES</h2>
              <div className="mt-[21px] overflow-hidden rounded-md border border-[#b3bfca] text-[14px] font-medium">
                {FIELDS.map(([label, value, kind], i) => (
                  <div key={label} className={i === 0 ? "flex h-9" : "flex h-[37px] border-t border-[#b3bfca]"}>
                    <div className="flex w-[170px] items-center border-r border-[#b3bfca] bg-[#f4f6f9] pl-3 pt-px text-[#4a545e] [-webkit-text-stroke:0.25px_#4a545e]">{label}</div>
                    <div className={kind === "disabled" ? "flex flex-1 items-center rounded-md bg-[#f2f2f2] pl-[5px] pt-px text-[#84898f] [-webkit-text-stroke:0.25px_#84898f]" : kind === "select" ? "flex flex-1 items-center justify-between pl-[15px] pr-[11px] pt-px [-webkit-text-stroke:0.35px_#111]" : "flex flex-1 items-center pl-[5px] pt-px [-webkit-text-stroke:0.35px_#111]"}>
                      {value}
                      {kind === "select" && <span className="ml-auto -mt-1.5"><span className="flex"><Caret /></span></span>}
                    </div>
                  </div>
                ))}
              </div>
              <div className="mt-5 border-t border-dashed border-[#b5b5b5]" />
              <h2 className="mt-5 text-[16px] leading-[22px] font-bold tracking-[0.5px]">VALUATION DATA: USED TO PERFORM<br />COMPSET COMPARISONS</h2>
              <div className="mt-4 flex h-[42px] items-center justify-between rounded-md border border-[#b5b5b5] pl-[13px] pr-[10px] pb-[2px] text-[14px] font-medium [-webkit-text-stroke:0.35px_#111]">
                SOLVE FOR CAPRATE
                <span className="-mt-1.5 flex"><Caret /></span>
              </div>
            </section>
            <div className="h-[212px] w-2 shrink-0 rounded bg-[#12589c]" />

            <section className="ml-[30px] flex h-full w-[1272px] shrink-0 flex-col rounded-md bg-white px-4 pt-4">
              <div className="flex h-[42px] w-[310px] items-center justify-between rounded-[5px] border border-[#808080] pl-[15px] pr-4 pb-px text-[14px] font-bold">
                116 E 7 STREET
                <svg viewBox="0 0 10 6" className="h-[6px] w-[10px]" fill="none" stroke="#111" strokeWidth="1.600"><path d="M.5 .5L5 5L9.500 .5" /></svg>
              </div>
              <div className="relative mt-4 h-[571px] w-[1240px] overflow-hidden font-['Liberation_Sans',sans-serif]">
                <RegionMap />
                <Pin className="absolute left-[627px] top-[235px] h-[38px] w-[30px]" />
                <div className="absolute left-[1054px] top-0 flex h-[50px] w-[156px] items-center gap-3 bg-white/85 pl-[6px] text-[16px] font-bold tracking-[0.5px] whitespace-nowrap text-black">
                  <svg viewBox="0 0 14 14" className="h-[14px] w-[14px]" fill="none"><path d="M2 1Q6 6 12 12" stroke="#d9c8ec" /><path d="M4 6L8 2" stroke="#f3dc9a" /><rect x=".5" y=".5" width="13" height="13" stroke="#111" /></svg>
                  Canvas Light
                </div>
                <div className="absolute left-[1173px] top-[77px] flex flex-col gap-[22px]">
                  <MapButton><circle cx="10" cy="10" r="8.500" strokeWidth="1.200" /><circle cx="10" cy="10" r="4.500" fill="#333" /></MapButton>
                  <MapButton><path d="M2 10H18M10 2V18" /></MapButton>
                  <MapButton><path d="M2 10H18" /></MapButton>
                </div>
                <div className="absolute bottom-[9px] left-[5px] flex items-center gap-[3px] text-[8px] text-[#444]">
                  <span className="grid grid-cols-2 gap-px">
                    <i className="h-[4.500px] w-[4.500px] bg-[#f25022]" /><i className="h-[4.500px] w-[4.500px] bg-[#7fba00]" />
                    <i className="h-[4.500px] w-[4.500px] bg-[#00a4ef]" /><i className="h-[4.500px] w-[4.500px] bg-[#ffb900]" />
                  </span>
                  <span className="font-['Open_Sans',sans-serif] tracking-[-0.25px]">Microsoft Bing</span>
                </div>
                <div className="absolute right-[25px] bottom-[6px] flex flex-col items-end font-['Open_Sans',sans-serif] text-[9px] font-bold tracking-[0.5px] whitespace-nowrap text-black [text-shadow:1px_1px_0_#fff]">
                  <div className="flex gap-[9px] text-right leading-[11px]">
                    <div className="w-[88px]">25 miles<div className="h-[3px] border border-white bg-[#3f83ea]" /></div>
                    <div className="w-[55px]">25 km<div className="h-[3px] border border-white bg-[#3f83ea]" /></div>
                  </div>
                  <div className="mt-[9px] flex gap-[7px] leading-[14px]"><span>© 2022 Microsoft Corporation</span><span className="underline">Terms</span></div>
                </div>
              </div>
              <div className="mt-[17px] flex items-center gap-3 pl-[3px] text-[16px] leading-[22px] font-semibold">
                <Pin className="h-5 w-[17px]" />
                Client Property
              </div>
            </section>
          </div>
        </main>
      </div>
      <div className="absolute top-[904px] left-[170px] h-10 w-[1560px] shadow-[0_0_46px_16px_rgba(0,0,0,0.2)]" />
    </div>
  );
}
